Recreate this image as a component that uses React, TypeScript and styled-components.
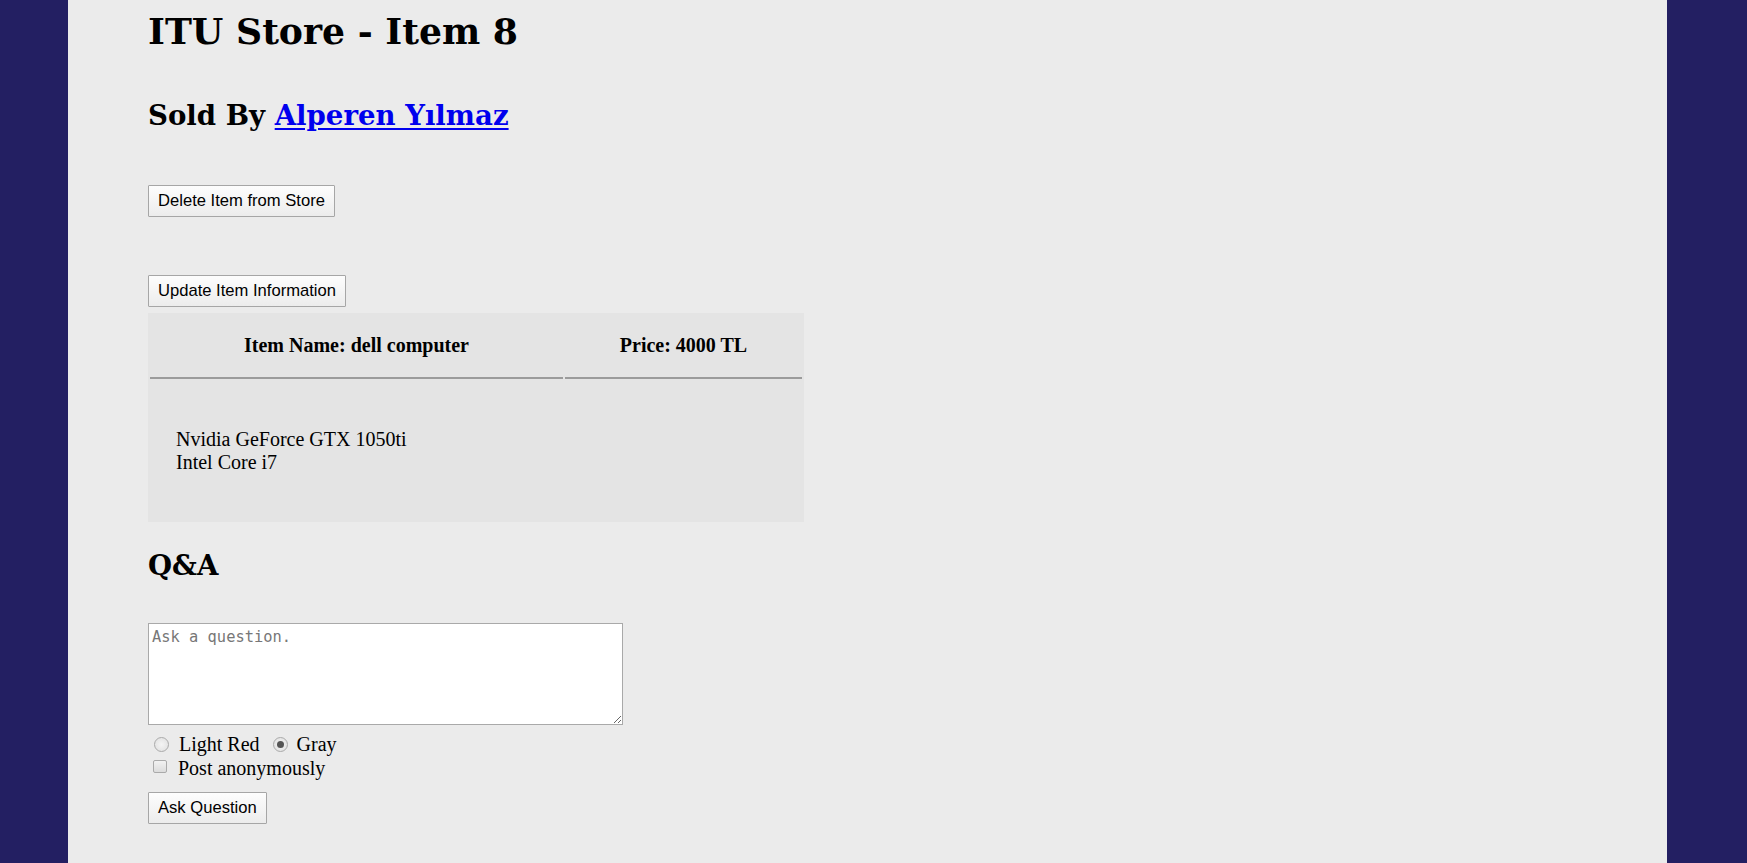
import React from "react";
import styled, { createGlobalStyle } from "styled-components";

const GlobalStyle = createGlobalStyle`
  html, body {
    margin: 0;
    padding: 0;
  }
  body {
    background: #231f62;
    font-family: "Liberation Serif", "Times New Roman", serif;
    font-size: 20px;
    color: #000;
  }
  * { box-sizing: border-box; }
`;

const Page = styled.div`
  display: flex;
  min-height: 100vh;
  padding: 0 80px 0 68px;
`;

const Main = styled.main`
  flex: 1;
  background: #ebebeb;
  padding: 12px 0 0 80px;
  display: flex;
  flex-direction: column;
  align-items: flex-start;
`;

const Title = styled.h1`
  margin: 0;
  font-family: "DejaVu Serif", Georgia, serif;
  font-weight: bold;
  font-size: 36.2px;
  line-height: 40px;
`;

const Heading = styled.h2<{ $top: number }>`
  margin: ${(p) => p.$top}px 0 0;
  font-family: "DejaVu Serif", Georgia, serif;
  font-weight: bold;
  font-size: 27.6px;
  line-height: 32px;
`;

const SellerLink = styled.a`
  color: #0000ee;
  text-decoration: underline;
  text-decoration-thickness: 2px;
  text-underline-offset: 3px;
`;

const Button = styled.button<{ $top: number }>`
  margin-top: ${(p) => p.$top}px;
  height: 32px;
  padding: 0 9px;
  font-family: "Liberation Sans", Arial, sans-serif;
  font-size: 16.6px;
  color: #000;
  border: 1px solid #a6a6a6;
  border-radius: 1px;
  background: linear-gradient(to bottom, #fdfdfd 0%, #f3f3f3 60%, #ececec 100%);
  cursor: pointer;
`;

const ItemTable = styled.table`
  margin-top: 6px;
  background: #e4e4e4;
  border-spacing: 2px;
  width: 656px;
`;

const HeadCell = styled.th<{ $w: number }>`
  width: ${(p) => p.$w}px;
  padding: 19px 0 20px;
  font-size: 20px;
  font-weight: bold;
  line-height: 23px;
  text-align: center;
  border-bottom: 2px solid #9b9b9b;
`;

const BodyCell = styled.td`
  padding: 47px 25px 47px 26px;
  font-size: 20px;
  line-height: 22.5px;
  vertical-align: middle;
`;

const QuestionBox = styled.textarea`
  margin-top: 41px;
  display: block;
  width: 475px;
  height: 102px;
  padding: 4px 3px;
  border: 1px solid #a9a9a9;
  background: #fff;
  font-family: "DejaVu Sans Mono", "Liberation Mono", monospace;
  font-size: 15.4px;
  &::placeholder {
    color: #777;
  }
`;

const OptionRow = styled.div<{ $top: number }>`
  margin-top: ${(p) => p.$top}px;
  display: flex;
  align-items: center;
  height: 24px;
  line-height: 24px;
  font-size: 20px;
`;

const Option = styled.label<{ $left: number; $gap: number }>`
  display: inline-flex;
  align-items: center;
  margin-left: ${(p) => p.$left}px;
  gap: ${(p) => p.$gap}px;
`;

const Radio = styled.input`
  appearance: none;
  margin: 0;
  width: 15px;
  height: 15px;
  border-radius: 50%;
  border: 1px solid #aaa;
  background: radial-gradient(circle, #f4f4f4 0%, #dfdfdf 100%);
  display: grid;
  place-content: center;
  flex: none;
  &:checked::before {
    content: "";
    width: 7px;
    height: 7px;
    border-radius: 50%;
    background: #555;
  }
`;

const Check = styled.input`
  appearance: none;
  margin: 0 0 3px 0;
  width: 14px;
  height: 13px;
  border-radius: 2px;
  border: 1px solid #aaa;
  background: linear-gradient(to bottom, #f2f2f2, #dcdcdc);
  flex: none;
`;

export default function App() {
  return (
    <>
      <GlobalStyle />
      <Page>
        <Main>
          <Title>ITU Store - Item 8</Title>
          <Heading $top={48}>
            Sold By <SellerLink href="#">Alperen Yılmaz</SellerLink>
          </Heading>
          <Button $top={53}>Delete Item from Store</Button>
          <Button $top={58}>Update Item Information</Button>
          <ItemTable>
            <thead>
              <tr>
                <HeadCell $w={413}>Item Name: dell computer</HeadCell>
                <HeadCell $w={237}>Price: 4000 TL</HeadCell>
              </tr>
            </thead>
            <tbody>
              <tr>
                <BodyCell>
                  Nvidia GeForce GTX 1050ti
                  <br />
                  Intel Core i7
                </BodyCell>
                <BodyCell />
              </tr>
            </tbody>
          </ItemTable>
          <Heading $top={28}>Q&amp;A</Heading>
          <QuestionBox placeholder="Ask a question." />
          <OptionRow $top={7}>
            <Option $left={6} $gap={10}>
              <Radio type="radio" name="color" />
              <span>Light Red</span>
            </Option>
            <Option $left={13} $gap={9}>
              <Radio type="radio" name="color" defaultChecked />
              <span>Gray</span>
            </Option>
          </OptionRow>
          <OptionRow $top={0}>
            <Option $left={5} $gap={11}>
              <Check type="checkbox" />
              <span>Post anonymously</span>
            </Option>
          </OptionRow>
          <Button $top={12}>Ask Question</Button>
        </Main>
      </Page>
    </>
  );
}
